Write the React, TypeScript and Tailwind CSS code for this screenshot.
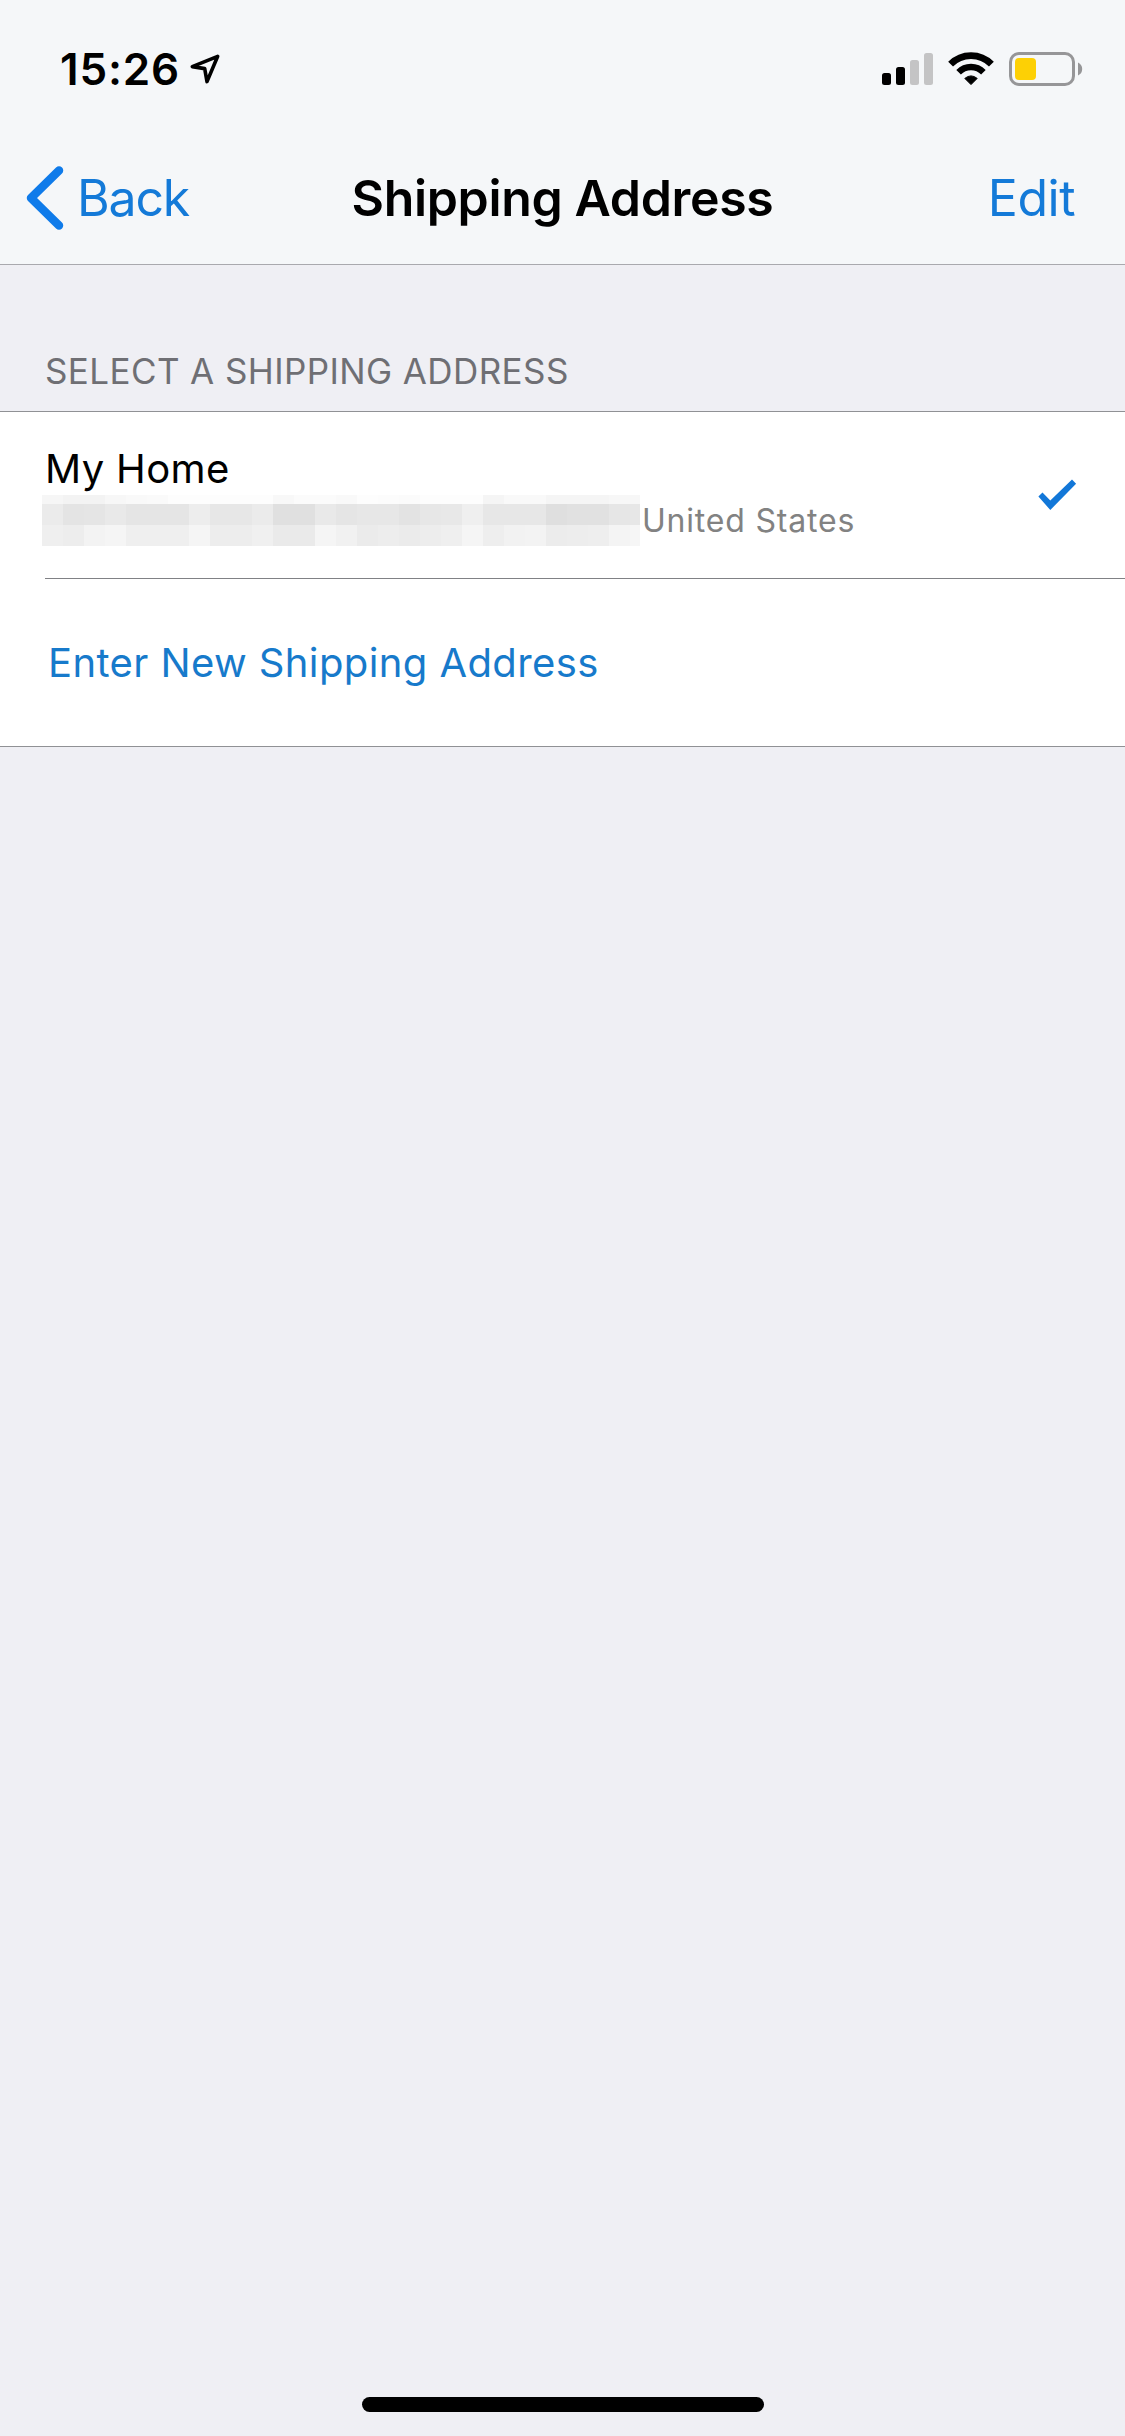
import { useState } from "react";

// Greyscale cells covering the private part of the address, 21px per step
const maskRows = [
  {
    height: 9,
    cells: ["#f6f6f6", "#f3f3f3", "#f3f3f3", "#f7f7f7", "#f9f9f9", "#fafafa", "#fdfdfd", "#fdfdfd", "#fdfdfd", "#fdfdfd", "#fdfdfd", "#f8f8f8", "#fbfbfb", "#fbfbfb", "#f9f9f9", "#fdfdfd", "#fcfcfc", "#fbfbfb", "#fdfdfd", "#fdfdfd", "#fdfdfd", "#f5f5f5", "#f9f9f9", "#f9f9f9", "#f5f5f5", "#f5f5f5", "#f5f5f5", "#f7f7f7", "#f7f7f7"],
  },
  {
    height: 21,
    cells: ["#ebebeb", "#e4e4e4", "#e5e5e5", "#e9e9e9", "#e5e5e5", "#e5e5e5", "#e5e5e5", "#ededed", "#e7e7e7", "#e7e7e7", "#ebebeb", "#e0e0e0", "#e0e0e0", "#e9e9e9", "#e5e5e5", "#e7e7e7", "#e7e7e7", "#e3e3e3", "#e7e7e7", "#e8e8e8", "#efefef", "#e7e7e7", "#e7e7e7", "#e7e7e7", "#dfdfdf", "#e1e1e1", "#e1e1e1", "#e6e6e6", "#e7e7e7"],
  },
  {
    height: 21,
    cells: ["#efefef", "#ededed", "#f3f3f3", "#f5f5f5", "#efefef", "#efefef", "#efefef", "#f5f5f5", "#ededed", "#ededed", "#f0f0f0", "#eaeaea", "#eaeaea", "#f5f5f5", "#f1f1f1", "#ebebeb", "#ededed", "#ebebeb", "#ededed", "#efefef", "#f5f5f5", "#eeeeee", "#f2f2f2", "#f3f3f3", "#ececec", "#ededed", "#eeeeee", "#f4f4f4", "#f6f6f6"],
  },
];

const LocationIcon = () => (
  <svg width="32" height="32" viewBox="0 0 32 32" fill="none" className="ml-[9px]">
    <path
      d="M28.7 3.3 3.3 13.6 15.7 15.6 18 28.6Z"
      stroke="#000"
      strokeWidth="3.6"
      strokeLinejoin="round"
    />
  </svg>
);

const SignalIcon = () => (
  <svg width="52" height="34" viewBox="0 0 52 34">
    <rect x="0" y="21" width="9" height="12" rx="2.5" fill="#000" />
    <rect x="14" y="15" width="9" height="18" rx="2.5" fill="#000" />
    <rect x="28" y="8" width="9" height="25" rx="2.5" fill="#c4c4c5" />
    <rect x="42" y="1" width="9" height="32" rx="2.5" fill="#c4c4c5" />
  </svg>
);

const WifiIcon = () => (
  <svg width="46" height="34" viewBox="0 0 46 34">
    <path d="M2.6 12.2A28.6 28.6 0 0 1 43.4 12.2" fill="none" stroke="#000" strokeWidth="6.8" />
    <path d="M10.6 20.2A17.4 17.4 0 0 1 35.4 20.2" fill="none" stroke="#000" strokeWidth="6.4" />
    <path d="M16.8 26.4Q23 21.4 29.2 26.4L23 32.6Z" stroke="#000" strokeWidth="1" strokeLinejoin="round" />
  </svg>
);

const BatteryIcon = () => (
  <svg width="74" height="34" viewBox="0 0 74 34">
    <rect x="1.5" y="1.5" width="63" height="31" rx="8.5" fill="none" stroke="#969698" strokeWidth="3" />
    <rect x="6" y="6" width="21" height="22" rx="4" fill="#fdd005" />
    <path d="M69 10.5Q73.2 12.5 73.2 17T69 23.5Z" fill="#969698" />
  </svg>
);

export default function App() {
  const [selected, setSelected] = useState(true);

  return (
    <div className="flex h-[2436px] w-[1125px] flex-col bg-[#efeff4] font-['Inter',sans-serif]">
      <header className="border-b border-[#a9a9ae] bg-[#f5f7f9]">
        <div className="flex h-[132px] items-center justify-between pt-1.5 pr-[42px] pl-[60px]">
          <div className="flex items-center">
            <span className="text-[44px] leading-none font-semibold tracking-[0.8px]">15:26</span>
            <LocationIcon />
          </div>
          <div className="flex items-center">
            <SignalIcon />
            <div className="ml-3.5">
              <WifiIcon />
            </div>
            <div className="ml-[15px]">
              <BatteryIcon />
            </div>
          </div>
        </div>
        <nav className="grid h-[132px] grid-cols-[1fr_auto_1fr] items-center px-[26px] text-[50px] leading-none">
          <button type="button" className="flex items-center text-[#0f7bea]">
            <svg width="40" height="66" viewBox="0 0 40 66" fill="none">
              <path
                d="M33 5.5 5 33 33 60.5"
                stroke="currentColor"
                strokeWidth="8.5"
                strokeLinecap="round"
                strokeLinejoin="round"
              />
            </svg>
            <span className="ml-[11px] tracking-[-1.2px] text-[#147ad8]">Back</span>
          </button>
          <h1 className="font-semibold tracking-[-0.35px] whitespace-nowrap">Shipping Address</h1>
          <button type="button" className="mr-6 justify-self-end tracking-[-0.5px] text-[#147ad8]">
            Edit
          </button>
        </nav>
      </header>

      <main>
        <h2 className="flex h-[146px] items-end pb-[22px] pl-[45px] text-[35px] leading-[36px] tracking-[0.4px] text-[#6f6f74] uppercase">
          Select a shipping address
        </h2>
        <div className="border-y border-[#909195] bg-white">
          <button
            type="button"
            onClick={() => setSelected(!selected)}
            className="flex h-[167px] w-full items-start text-left"
          >
            <div className="ml-[45px] flex h-full flex-1 justify-between border-b border-[#808185] pr-12">
              <div className="-ml-[3px] pt-[37px]">
                <p className="pl-[3px] text-[40px] leading-[40px] tracking-[0.35px]">My Home</p>
                <div className="mt-[6px] flex items-start">
                  <div className="w-[598px] overflow-hidden">
                    {maskRows.map((row, i) => (
                      <div key={i} className="flex w-[609px]" style={{ height: row.height }}>
                        {row.cells.map((color, j) => (
                          <span key={j} className="w-[21px]" style={{ backgroundColor: color }} />
                        ))}
                      </div>
                    ))}
                  </div>
                  <span className="mt-[9px] ml-0.5 text-[32px] leading-[33px] tracking-[0.8px] text-[#828282]">
                    United States
                  </span>
                </div>
              </div>
              {selected && (
                <svg width="39" height="32" viewBox="0 0 39 32" className="mt-[67px]">
                  <path d="M.4 17.6 4.5 13.4 12.3 21.4 34 .6 38.1 4.8 12.3 31Z" fill="#1277d8" />
                </svg>
              )}
            </div>
          </button>
          <button
            type="button"
            className="flex h-[167px] w-full items-center pl-12 text-[40px] leading-none tracking-[0.4px] text-[#177acb]"
          >
            Enter New Shipping Address
          </button>
        </div>
      </main>

      <div className="mx-auto mt-auto mb-6 h-[15px] w-[402px] rounded-full bg-black" />
    </div>
  );
}
